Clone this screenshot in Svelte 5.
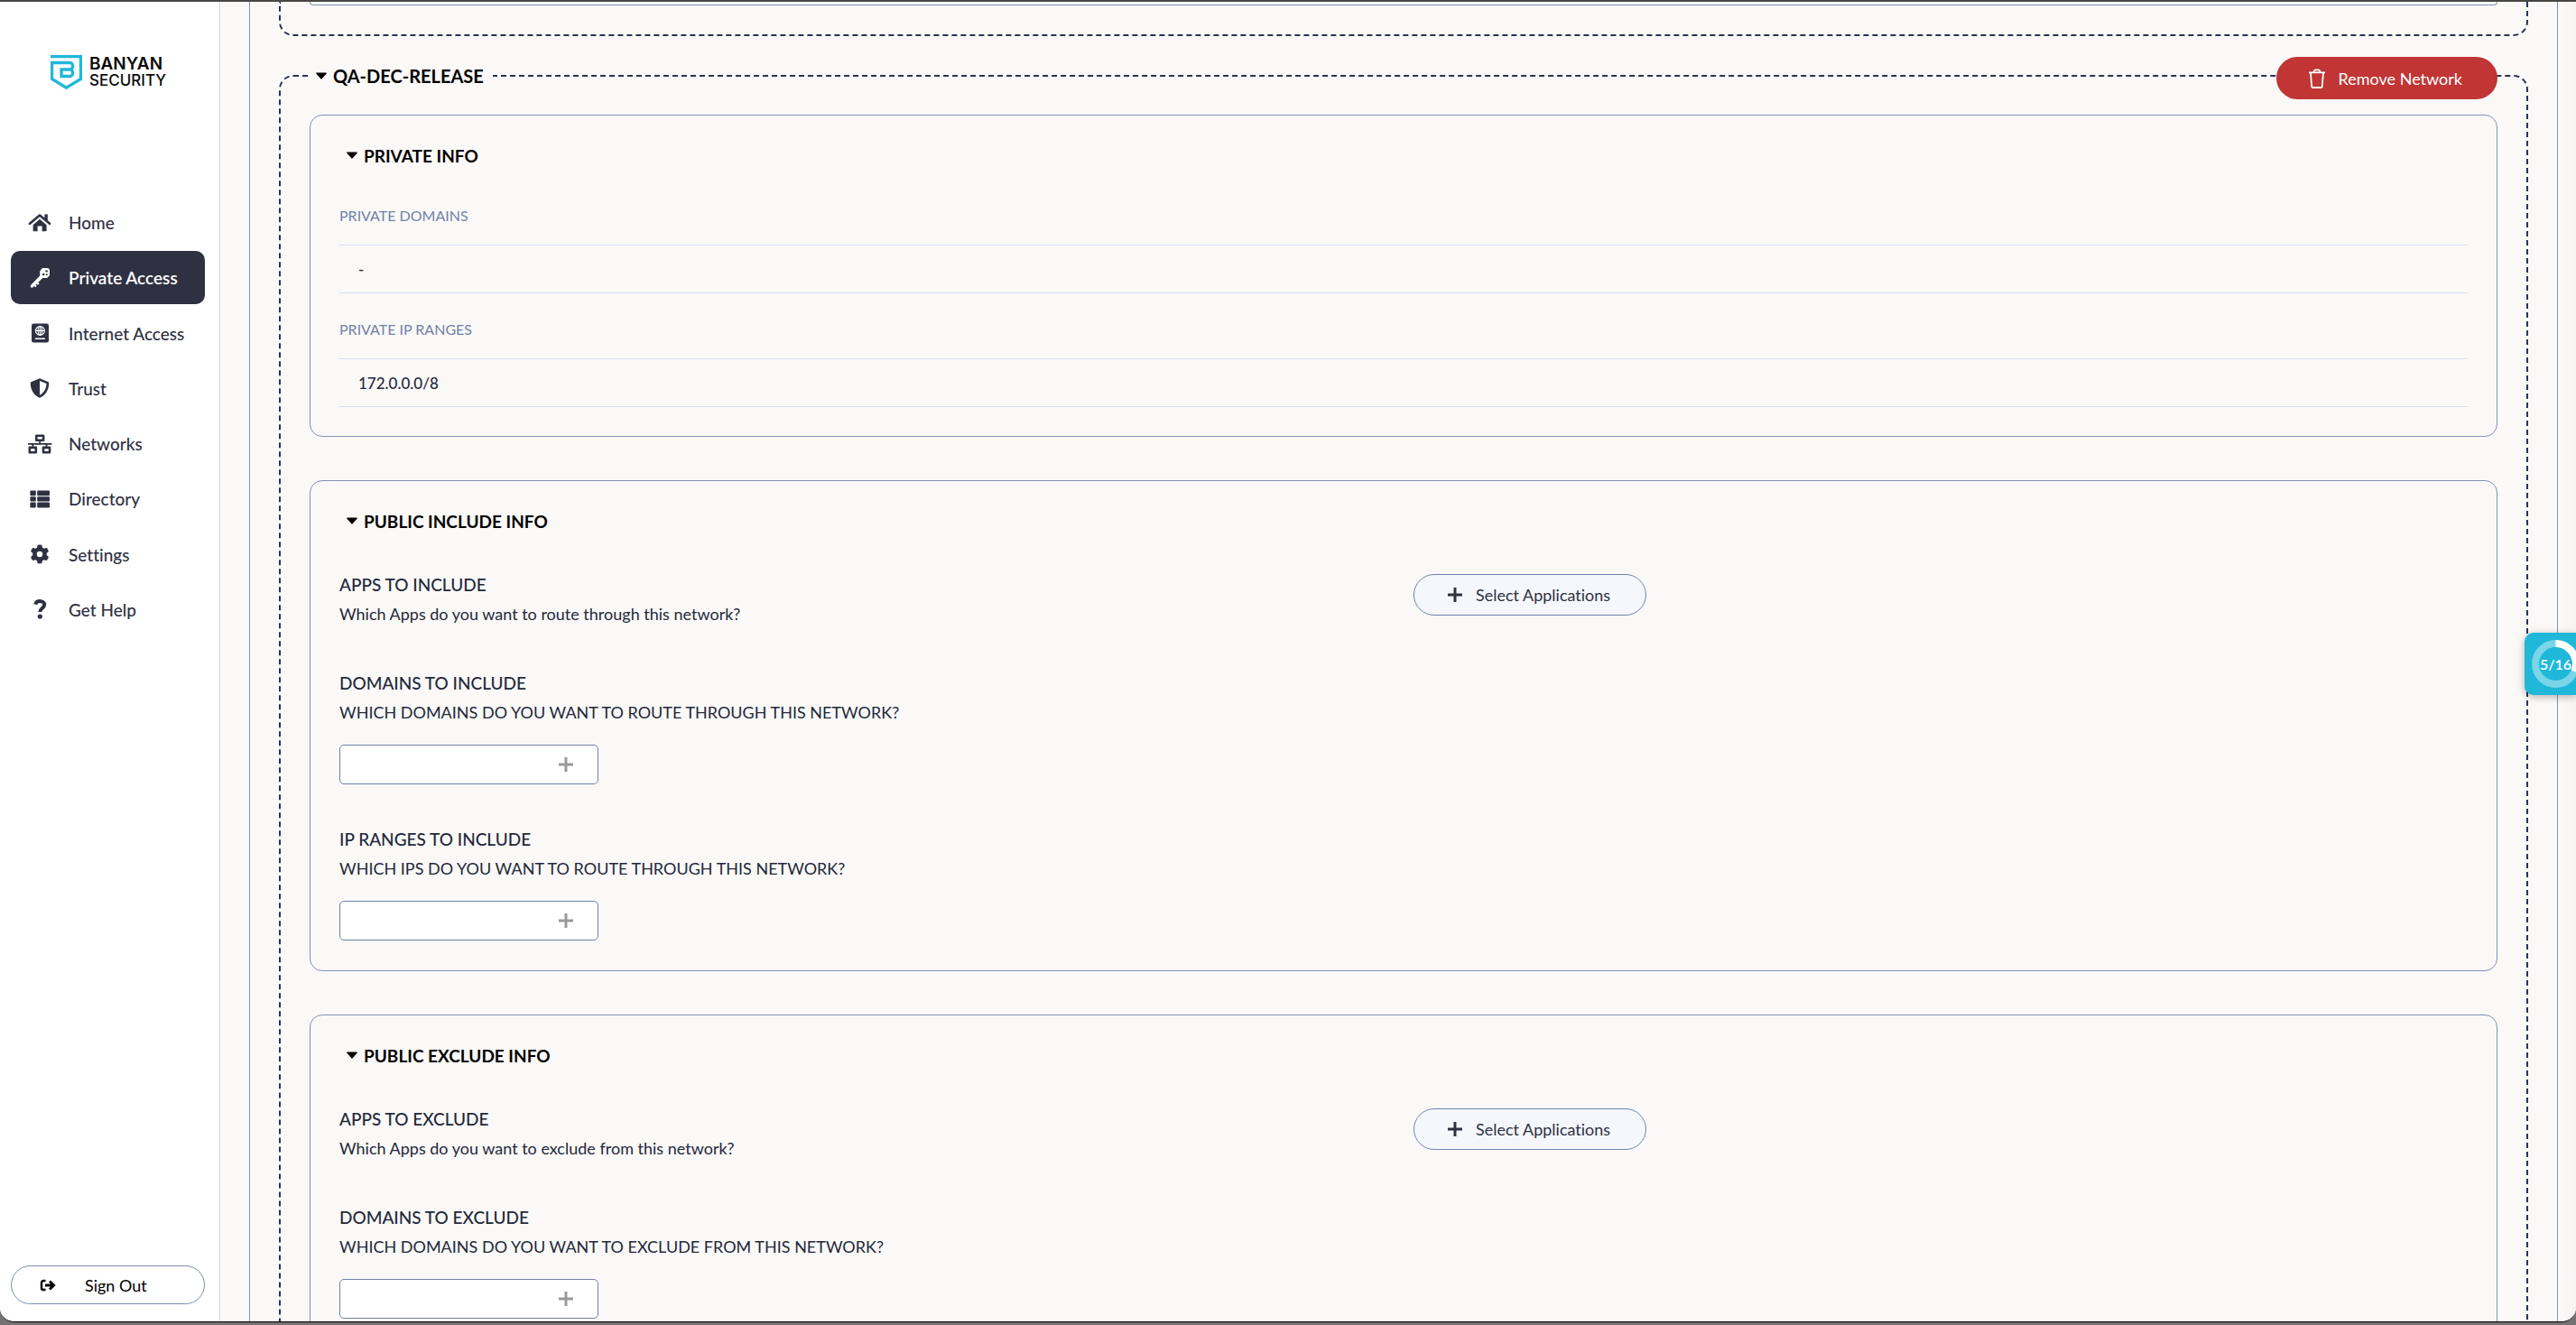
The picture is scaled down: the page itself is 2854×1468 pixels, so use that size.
<script>
  const navItems = [
    { label: 'Home', icon: 'home' },
    { label: 'Private Access', icon: 'key', active: true },
    { label: 'Internet Access', icon: 'passport' },
    { label: 'Trust', icon: 'shield' },
    { label: 'Networks', icon: 'network' },
    { label: 'Directory', icon: 'list' },
    { label: 'Settings', icon: 'gear' },
    { label: 'Get Help', icon: 'help' },
  ];

  const privateTables = [
    { title: 'PRIVATE DOMAINS', value: '-' },
    { title: 'PRIVATE IP RANGES', value: '172.0.0.0/8' },
  ];

  const sections = [
    {
      title: 'PUBLIC INCLUDE INFO',
      apps: 'APPS TO INCLUDE',
      question: 'Which Apps do you want to route through this network?',
      fields: [
        { id: 'domains-include', label: 'DOMAINS TO INCLUDE', hint: 'WHICH DOMAINS DO YOU WANT TO ROUTE THROUGH THIS NETWORK?' },
        { id: 'ips-include', label: 'IP RANGES TO INCLUDE', hint: 'WHICH IPS DO YOU WANT TO ROUTE THROUGH THIS NETWORK?' },
      ],
    },
    {
      title: 'PUBLIC EXCLUDE INFO',
      apps: 'APPS TO EXCLUDE',
      question: 'Which Apps do you want to exclude from this network?',
      fields: [
        { id: 'domains-exclude', label: 'DOMAINS TO EXCLUDE', hint: 'WHICH DOMAINS DO YOU WANT TO EXCLUDE FROM THIS NETWORK?' },
      ],
    },
  ];
</script>

{#snippet caret()}
  <svg class="caret" viewBox="0 0 14 8" aria-hidden="true">
    <path d="M2 1.2H12L7 6.8Z" fill="currentColor" stroke="currentColor" stroke-width="1.6" stroke-linejoin="round" />
  </svg>
{/snippet}

{#snippet navIcon(name)}
  <svg class="nav-icon" viewBox="0 0 28 24" fill="currentColor" aria-hidden="true">
    {#if name === 'home'}
      <rect x="19.4" y="2.4" width="3.4" height="7" />
      <path d="M3 12.8 14 3.6 25 12.8" fill="none" stroke="currentColor" stroke-width="2.6" stroke-linecap="round" stroke-linejoin="round" />
      <path d="M14 7.8 21.6 14.2V20.2a1 1 0 0 1-1 1H16.6V15.6H11.6V21.2H7.6a1 1 0 0 1-1-1V14.2Z" />
    {:else if name === 'key'}
      <path d="M17.5 1.5H22a3 3 0 0 1 3 3V8.500a3 3 0 0 1-.8 2L22.600 12a2 2 0 0 1-1.400.6H17.200L12.400 17.400 13.600 18.800 12 20.400 10.700 19.100 9.600 20.200 10.800 21.500 9.300 22.900 7.800 21.600 6 23.300 3.800 22.900 4 20.600 14.200 10.200V5.800a2 2 0 0 1 .6-1.500L16.200 2.100a2 2 0 0 1 1.300-.6Z" transform="translate(0 -.6)" />
      <circle cx="18.200" cy="8" r="1.300" fill="#2f3142" />
      <circle cx="21.600" cy="4.400" r="1.200" fill="#2f3142" />
      <circle cx="21.800" cy="8.200" r="1" fill="#2f3142" />
    {:else if name === 'passport'}
      <rect x="5" y="1.500" width="19" height="21" rx="2.200" />
      <g fill="none" stroke="#fff" stroke-width="1.100">
        <circle cx="14.400" cy="9.400" r="4.900" />
        <ellipse cx="14.400" cy="9.400" rx="2.200" ry="4.900" />
        <path d="M9.500 9.400H19.300M14.400 4.500V14.300" />
      </g>
      <path d="M9.500 18.200H19.300" stroke="#fff" stroke-width="1.500" stroke-linecap="round" />
    {:else if name === 'shield'}
      <path fill-rule="evenodd" d="M14 1.200 23.200 4.900a1.500 1.500 0 0 1 1 1.400C24.200 13.500 21 19.600 14.600 22.500a1.500 1.500 0 0 1-1.200 0C7 19.600 3.800 13.500 3.800 6.300a1.500 1.500 0 0 1 1-1.400ZM14 4V19.700C18.700 17.200 21.300 12.800 21.500 7Z" />
    {:else if name === 'network'}
      <g fill="none" stroke="currentColor" stroke-width="2.600" stroke-linejoin="round">
        <rect x="10.300" y="2.700" width="7.800" height="5" />
        <rect x="2.800" y="15.900" width="7" height="5.400" />
        <rect x="18" y="15.900" width="7" height="5.400" />
      </g>
      <path d="M14.200 8V11.600M6.300 12V15M21.500 12V15M1 11.800H27.400" stroke="currentColor" stroke-width="1.800" />
    {:else if name === 'list'}
      <rect x="3.400" y="2.400" width="6.400" height="5.800" rx="1.200" />
      <rect x="3.400" y="9.200" width="6.400" height="5.400" rx="1" />
      <rect x="3.400" y="15.600" width="6.400" height="5.800" rx="1.200" />
      <rect x="11.200" y="2.400" width="13.800" height="5.800" rx="1.200" />
      <rect x="11.200" y="9.200" width="13.800" height="5.400" rx="1" />
      <rect x="11.200" y="15.600" width="13.800" height="5.800" rx="1.200" />
    {:else if name === 'gear'}
      <path transform="translate(3.600 1.600) scale(.0406)" d="M495.900 166.600c3.200 8.700 .5 18.400-6.400 24.600l-43.300 39.400c1.100 8.300 1.700 16.800 1.700 25.400s-.6 17.100-1.700 25.400l43.300 39.400c6.900 6.200 9.600 15.900 6.400 24.600c-4.400 11.900-9.700 23.300-15.800 34.300l-4.700 8.100c-6.600 11-14 21.400-22.100 31.200c-5.900 7.200-15.700 9.600-24.500 6.800l-55.700-17.700c-13.400 10.300-28.200 18.900-44 25.400l-12.500 57.100c-2 9.100-9 16.300-18.200 17.800c-13.800 2.300-28 3.500-42.500 3.500s-28.700-1.200-42.500-3.500c-9.200-1.500-16.200-8.700-18.200-17.800l-12.500-57.100c-15.800-6.500-30.600-15.100-44-25.400L83.100 425.900c-8.800 2.800-18.600 .3-24.500-6.800c-8.100-9.800-15.500-20.200-22.100-31.200l-4.700-8.100c-6.100-11-11.400-22.400-15.800-34.300c-3.200-8.700-.5-18.400 6.400-24.600l43.300-39.400C64.600 273.100 64 264.600 64 256s.6-17.100 1.700-25.400L22.400 191.200c-6.900-6.200-9.600-15.900-6.400-24.600c4.400-11.900 9.700-23.300 15.800-34.300l4.700-8.100c6.600-11 14-21.400 22.100-31.200c5.900-7.200 15.700-9.600 24.500-6.800l55.700 17.700c13.400-10.300 28.200-18.900 44-25.400l12.500-57.100c2-9.100 9-16.300 18.200-17.800C227.300 1.200 241.500 0 256 0s28.700 1.200 42.500 3.500c9.200 1.500 16.200 8.700 18.200 17.800l12.500 57.100c15.800 6.500 30.600 15.100 44 25.400l55.700-17.700c8.800-2.800 18.600-.3 24.500 6.800c8.100 9.800 15.500 20.200 22.100 31.200l4.700 8.100c6.100 11 11.400 22.400 15.800 34.300zM256 336a80 80 0 1 0 0-160 80 80 0 1 0 0 160z" />
    {:else}
      <path d="M9.200 6.600C9.800 4 11.700 2.900 14 2.900 17 2.900 19.200 4.500 19.200 7.100 19.200 10.700 14.300 10.900 14.300 15" fill="none" stroke="currentColor" stroke-width="4" stroke-linecap="butt" />
      <circle cx="14.300" cy="20" r="2.600" />
    {/if}
  </svg>
{/snippet}

{#snippet plus(cls)}
  <svg class={cls} viewBox="0 0 18 18" aria-hidden="true">
    <path d="M9 1V17M1 9H17" fill="none" stroke="currentColor" stroke-width="3" />
  </svg>
{/snippet}

<div class="desktop">
  <div class="window">
    <aside class="sidebar">
      <a class="logo" href="#home" aria-label="Banyan Security">
        <svg class="logo-mark" viewBox="0 0 35 38" fill="none" stroke="#1fb8d9" stroke-width="3.300" aria-hidden="true">
          <path d="M0 1.500H33.500V26.500L17.500 36.200 1.500 26.500V8.500H21.500a3 3 0 0 1 3 3V13a3 3 0 0 1-3 3H12V23.500H21.500a3 3 0 0 0 3-3V19a3 3 0 0 0-3-3" />
        </svg>
        <span class="logo-text">
          <span class="logo-top">BANYAN</span>
          <span class="logo-bottom">SECURITY</span>
        </span>
      </a>
      <nav class="nav">
        {#each navItems as item}
          <a class="nav-item" class:active={item.active} href="#{item.icon}">
            {@render navIcon(item.icon)}
            <span>{item.label}</span>
          </a>
        {/each}
      </nav>
      <button class="sign-out" type="button">
        <svg class="sign-out-icon" viewBox="0 0 18 14" fill="none" stroke="currentColor" stroke-width="2.400" aria-hidden="true">
          <path d="M6.500 2H4A2 2 0 0 0 2 4V10A2 2 0 0 0 4 12H6.500" />
          <path d="M6 7H15M11 2.600 15.600 7 11 11.400" stroke-width="2.800" />
        </svg>
        <span>Sign Out</span>
      </button>
    </aside>

    <main class="main">
      <div class="panel">
        <div class="network-end">
          <div class="card-end"></div>
        </div>

        <fieldset class="network">
          <legend>
            <button class="toggle legend-toggle" type="button" aria-expanded="true">
              {@render caret()}
              <span>QA-DEC-RELEASE</span>
            </button>
          </legend>
          <button class="remove" type="button">
            <svg class="trash" viewBox="0 0 20 22" fill="none" stroke="currentColor" stroke-width="1.800" stroke-linejoin="round" aria-hidden="true">
              <path d="M1 4.400H19M3 4.600 4.200 19.600A1.500 1.500 0 0 0 5.700 21H14.300A1.500 1.500 0 0 0 15.800 19.600L17 4.600" />
              <path d="M6.400 4.200C6.600 2.200 7.600 1.400 9 1.400H11C12.400 1.400 13.400 2.200 13.600 4.200" />
            </svg>
            <span>Remove Network</span>
          </button>

          <section class="card">
            <h2>
              <button class="toggle" type="button" aria-expanded="true">
                {@render caret()}
                <span>PRIVATE INFO</span>
              </button>
            </h2>
            <div class="tables">
              {#each privateTables as t}
                <table>
                  <thead><tr><th scope="col">{t.title}</th></tr></thead>
                  <tbody><tr><td>{t.value}</td></tr></tbody>
                </table>
              {/each}
            </div>
          </section>

          {#each sections as s}
            <section class="card">
              <h2>
                <button class="toggle" type="button" aria-expanded="true">
                  {@render caret()}
                  <span>{s.title}</span>
                </button>
              </h2>
              <div class="groups">
                <div class="apps">
                  <div>
                    <h3>{s.apps}</h3>
                    <p>{s.question}</p>
                  </div>
                  <button class="select" type="button">
                    {@render plus('plus')}
                    <span>Select Applications</span>
                  </button>
                </div>
                {#each s.fields as f}
                  <div class="group">
                    <h3><label for={f.id}>{f.label}</label></h3>
                    <p>{f.hint}</p>
                    <div class="entry">
                      <input id={f.id} type="text" />
                      <button class="add" type="button" aria-label="Add">{@render plus('plus thin')}</button>
                    </div>
                  </div>
                {/each}
              </div>
            </section>
          {/each}
        </fieldset>
      </div>
    </main>

    <button class="progress" type="button">
      <svg class="ring" viewBox="0 0 53 53" fill="none" stroke-width="8" aria-hidden="true">
        <circle cx="26.500" cy="26.500" r="22.500" stroke="#79d5e7" />
        <circle cx="26.500" cy="26.500" r="22.500" stroke="#fff" pathLength="16" stroke-dasharray="5 11" transform="rotate(-90 26.500 26.500)" />
      </svg>
      <span class="count">5/16</span>
    </button>
  </div>
</div>

<style>
  :global(body) {
    margin: 0;
    background: #747273;
  }
  .desktop {
    box-sizing: border-box;
    height: 100vh;
    padding-bottom: 3px;
    overflow: hidden;
    font-family: Lato, 'Liberation Sans', sans-serif;
    font-variant-ligatures: none;
    font-size: 18px;
    color: #24283a;
  }
  .window {
    position: relative;
    box-sizing: border-box;
    height: 100%;
    display: flex;
    overflow: hidden;
    border-top: 2px solid #474743;
    border-bottom: 1px solid #000;
    border-radius: 0 0 16px 16px;
    background: #faf9f7;
  }
  button {
    font: inherit;
    color: inherit;
    margin: 0;
    padding: 0;
    border: 0;
    background: none;
    cursor: pointer;
  }
  a {
    color: inherit;
    text-decoration: none;
  }
  svg {
    display: block;
    flex: none;
  }

  .sidebar {
    flex: none;
    box-sizing: border-box;
    width: 244px;
    display: flex;
    flex-direction: column;
    padding: 59px 16px 19px 12px;
    border-right: 1px solid #d0d8ec;
    background: #fff;
  }
  .logo {
    display: flex;
    gap: 8px;
    margin-left: 44px;
    color: #0a0a0a;
    font-family: Inter, sans-serif;
  }
  .logo-mark {
    width: 35px;
    height: 38px;
  }
  .logo-text {
    display: flex;
    flex-direction: column;
    padding-top: 1px;
    line-height: 18px;
  }
  .logo-top {
    font-size: 19px;
    font-weight: 600;
  }
  .logo-bottom {
    font-size: 17px;
    font-weight: 500;
  }
  .nav {
    display: flex;
    flex-direction: column;
    justify-content: space-between;
    height: 488px;
    margin-top: 118px;
    margin-bottom: auto;
    color: #2f3142;
    font-weight: 500;
    font-size: 19px;
  }
  .nav-item {
    display: flex;
    align-items: center;
    gap: 18px;
    height: 59px;
    padding-left: 18px;
    border-radius: 10px;
    white-space: nowrap;
  }
  .nav-item.active {
    background: #2f3142;
    color: #fff;
    font-weight: 600;
  }
  .nav-icon {
    width: 28px;
    height: 24px;
  }
  .sign-out {
    display: flex;
    align-items: center;
    gap: 32px;
    height: 43px;
    padding-left: 31px;
    border: 1px solid #7b8bb0;
    border-radius: 22px;
    color: #000;
  }
  .sign-out-icon {
    width: 18px;
    height: 14px;
  }

  .main {
    flex: 1;
    min-width: 0;
    padding: 0 20px 0 32px;
    background: linear-gradient(to left, #f5f3f4, #faf9f7 14px);
  }
  .panel {
    padding: 0 32px;
    border: solid #8490b4;
    border-width: 0 1px;
    background: #faf9f7;
  }
  .network-end {
    padding: 0 32px 32px;
    border: 2px dashed #2a3352;
    border-top: 0;
    border-radius: 0 0 16px 16px;
  }
  .card-end {
    height: 3px;
    border: 1px solid #8490b4;
    border-top: 0;
    border-radius: 0 0 16px 16px;
  }
  .network {
    position: relative;
    min-width: 0;
    margin: 31px 0 0;
    padding: 30px 32px 32px;
    border: 2px dashed #2a3352;
    border-radius: 16px;
  }
  legend {
    padding: 0 10px 0 6px;
  }
  .toggle {
    display: flex;
    align-items: center;
    gap: 6px;
    height: 26px;
    color: #000;
    font-size: 19px;
    font-weight: 700;
  }
  .legend-toggle {
    font-size: 20px;
  }
  .caret {
    width: 14px;
    height: 8px;
  }
  .remove {
    position: absolute;
    top: -34px;
    right: 32px;
    display: flex;
    align-items: center;
    gap: 14px;
    height: 47px;
    padding: 0 39px 0 35px;
    border-radius: 24px;
    background: #c13535;
    color: #fff;
  }
  .trash {
    width: 20px;
    height: 22px;
  }

  .card {
    padding: 31px 32px 32px;
    border: 1px solid #8490b4;
    border-radius: 14px;
  }
  .card + .card {
    margin-top: 48px;
  }
  h2 {
    margin: 0;
    padding-left: 7px;
  }
  h3 {
    margin: 0;
    font-size: 19px;
    font-weight: 500;
    line-height: 32px;
  }
  p {
    margin: 0;
    line-height: 32px;
  }
  .tables {
    padding-top: 14px;
  }
  table {
    width: 100%;
    border-spacing: 0;
  }
  th {
    padding: 28px 0 20px;
    color: #7381a8;
    font-size: 16px;
    font-weight: 400;
    line-height: 24px;
    text-align: left;
  }
  td {
    height: 52px;
    padding: 0 21px;
    border: solid #d5def2;
    border-width: 1px 0;
    font-size: 17px;
    font-weight: 500;
  }
  .groups {
    display: flex;
    flex-direction: column;
    gap: 45px;
    padding: 42px 0 1px;
  }
  .apps {
    display: grid;
    grid-template-columns: 1fr 1fr;
    gap: 22px;
    align-items: start;
  }
  .select {
    justify-self: start;
    display: flex;
    align-items: center;
    gap: 14px;
    height: 46px;
    margin-top: 4px;
    padding: 0 39px 0 36px;
    border: 1px solid #7184ad;
    border-radius: 23px;
    background: #f5f7fc;
    color: #2f3142;
  }
  .plus {
    width: 18px;
    height: 18px;
  }
  .thin {
    color: #999;
  }
  .entry {
    box-sizing: border-box;
    display: flex;
    align-items: center;
    width: 287px;
    height: 44px;
    margin-top: 20px;
    padding-right: 26px;
    border: 1px solid #7381a8;
    border-radius: 5px;
    background: #fff;
  }
  input {
    flex: 1;
    min-width: 0;
    height: 100%;
    box-sizing: border-box;
    padding: 0 12px;
    border: 0;
    outline: 0;
    background: none;
    font: inherit;
  }

  .progress {
    position: absolute;
    top: 699px;
    right: 0;
    display: grid;
    place-content: center start;
    width: 57px;
    height: 69px;
    padding-left: 8px;
    overflow: hidden;
    border-radius: 10px 0 0 10px;
    background: #1fb8d9;
    box-shadow: 0 2px 8px rgb(0 0 0 / 30%);
    color: #fff;
  }
  .ring,
  .count {
    grid-area: 1 / 1;
    place-self: center;
  }
  .ring {
    width: 53px;
    height: 53px;
  }
  .count {
    font-size: 16px;
    font-weight: 600;
  }
</style>
